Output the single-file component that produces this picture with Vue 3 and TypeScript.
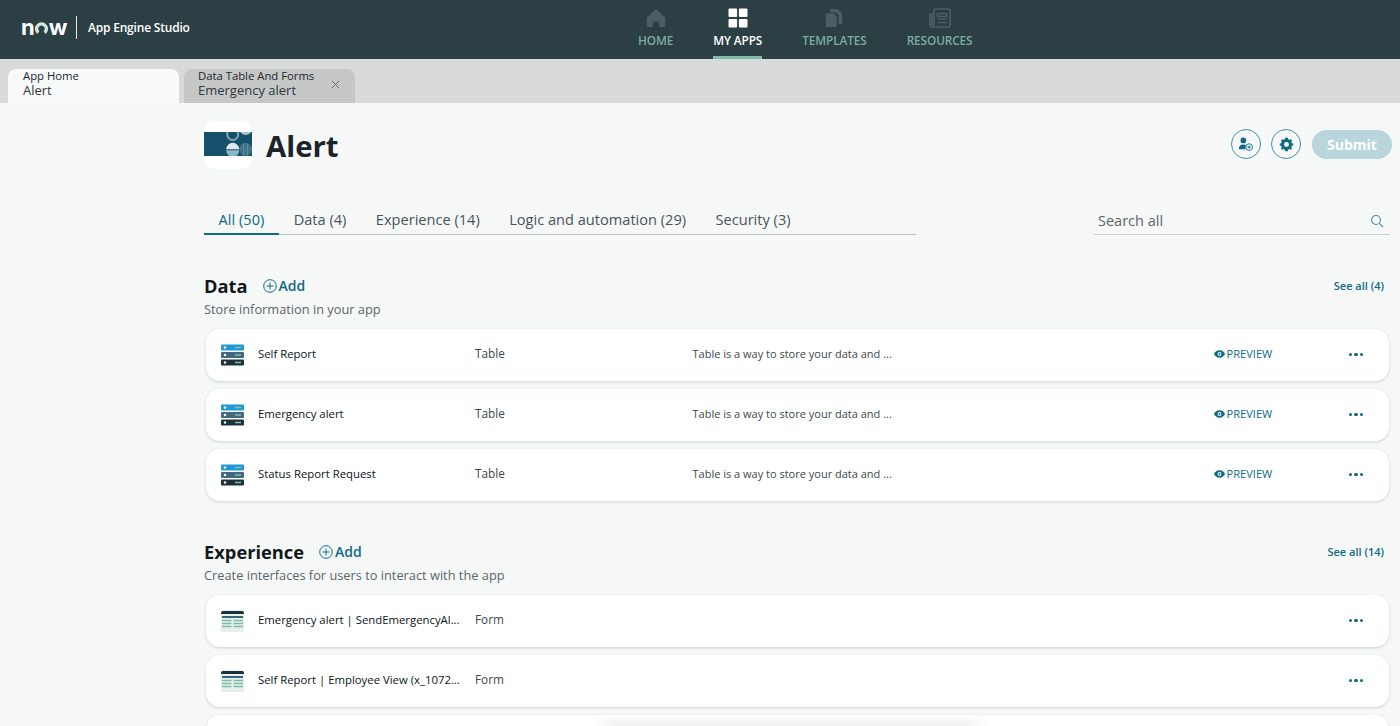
<script setup lang="ts">
interface Row { name: string; type: string; desc?: string; preview?: boolean; kind: 'table' | 'form' }
const navs = [
  { key: 'home', label: 'HOME' },
  { key: 'apps', label: 'MY APPS' },
  { key: 'templates', label: 'TEMPLATES' },
  { key: 'resources', label: 'RESOURCES' },
]
const filters = ['All (50)', 'Data (4)', 'Experience (14)', 'Logic and automation (29)', 'Security (3)']
const desc = 'Table is a way to store your data and ...'
const dataRows: Row[] = [
  { name: 'Self Report', type: 'Table', desc, preview: true, kind: 'table' },
  { name: 'Emergency alert', type: 'Table', desc, preview: true, kind: 'table' },
  { name: 'Status Report Request', type: 'Table', desc, preview: true, kind: 'table' },
]
const expRows: Row[] = [
  { name: 'Emergency alert | SendEmergencyAl...', type: 'Form', kind: 'form' },
  { name: 'Self Report | Employee View (x_1072...', type: 'Form', kind: 'form' },
  { name: '', type: '', kind: 'form' },
]
const sections = [
  { title: 'Data', sub: 'Store information in your app', see: 'See all (4)', rows: dataRows },
  { title: 'Experience', sub: 'Create interfaces for users to interact with the app', see: 'See all (14)', rows: expRows },
]
</script>

<template>
  <div class="page">
    <header class="topbar">
      <div class="brand">
        <span class="now">n<svg class="now-o" viewBox="0 0 16 16" width="15" height="15"><path d="M3.700 15A7 7 0 1 1 12.300 15L10.200 11.800A3.300 3.300 0 1 0 5.800 11.800Z" fill="#cfe8dc"/></svg>w</span>
        <span class="brand-sep"></span>
        <span class="brand-name">App Engine Studio</span>
      </div>
      <nav class="nav">
        <div v-for="n in navs" :key="n.key" class="nav-item" :class="{ active: n.key === 'apps' }">
          <svg v-if="n.key === 'home'" viewBox="0 0 22 22" width="22" height="22"><path d="M11 1.5 1 10.5V21h6.5v-6h7v6H21V10.5Z" fill="#4b5e62"/></svg>
          <svg v-else-if="n.key === 'apps'" viewBox="0 0 20 20" width="20" height="20"><rect x="0.5" y="0.5" width="8.6" height="8.6" rx="1" fill="#fff"/><rect x="10.9" y="0.5" width="8.6" height="8.6" rx="1" fill="#fff"/><rect x="0.5" y="10.9" width="8.6" height="8.6" rx="1" fill="#fff"/><rect x="10.9" y="10.9" width="8.6" height="8.6" rx="1" fill="#fff"/></svg>
          <svg v-else-if="n.key === 'templates'" viewBox="0 0 20 22" width="20" height="22"><path d="M7 1h7l5 5v11a1 1 0 0 1-1 1h-3V8l-3-3H6V2a1 1 0 0 1 1-1Z M2 6h8l3 3v11a1 1 0 0 1-1 1H2a1 1 0 0 1-1-1V7a1 1 0 0 1 1-1Z" fill="#4b5e62"/></svg>
          <svg v-else viewBox="0 0 22 20" width="22" height="20"><path d="M6 1h14a1 1 0 0 1 1 1v15a2 2 0 0 1-2 2H3a2 2 0 0 1-2-2V6h2v11h2V2a1 1 0 0 1 1-1Z" fill="none" stroke="#4b5e62" stroke-width="1.7"/><path d="M8.5 5.5h9v3h-9zM8.5 11h9M8.5 14.500h9" fill="none" stroke="#4b5e62" stroke-width="1.7"/></svg>
          <span class="nav-label">{{ n.label }}</span>
        </div>
      </nav>
    </header>

    <div class="tabstrip">
      <div class="tab tab-on">
        <div class="tab-top">App Home</div>
        <div class="tab-bot">Alert</div>
      </div>
      <div class="tab tab-off">
        <div class="tab-text">
          <div class="tab-top">Data Table And Forms</div>
          <div class="tab-bot">Emergency alert</div>
        </div>
        <svg class="tab-x" viewBox="0 0 10 10" width="9" height="9"><path d="M1 1l8 8M9 1l-8 8" stroke="#5c6468" stroke-width="1" fill="none"/></svg>
      </div>
    </div>

    <main class="main">
      <div class="head">
        <div class="app-ic">
          <svg viewBox="0 0 48 48" width="48" height="48">
            <defs><clipPath id="band"><rect x="0" y="11" width="48" height="24"/></clipPath></defs>
            <rect x="0" y="11" width="48" height="24" fill="#17506b"/>
            <g clip-path="url(#band)">
              <circle cx="28.700" cy="13.500" r="5.500" fill="none" stroke="#7da5b4" stroke-width="2"/>
              <circle cx="41.700" cy="8" r="6" fill="#a9c7d0"/>
              <circle cx="41.700" cy="28.300" r="6.500" fill="#3f7188"/>
              <path d="M39.500 22.500v12M43.500 22.500v12" stroke="#5a8a9e" stroke-width="1"/>
              <path d="M22.200 28.300a6.500 6.500 0 0 1 13 0Z" fill="#dfe9ec"/>
              <path d="M22.200 29.300a6.500 6.500 0 0 0 13 0Z" fill="#8fb6c3"/>
            </g>
          </svg>
        </div>
        <h1 class="title">Alert</h1>
        <div class="head-actions">
          <button class="circle">
            <svg viewBox="0 0 18 18" width="16" height="16"><circle cx="6" cy="5" r="3.200" fill="#0f6a85"/><path d="M1 15c0-4 2-5.500 5-5.500 1.300 0 2.300.3 3 .8A5 5 0 0 0 8.300 15Z" fill="#0f6a85"/><circle cx="12.500" cy="12.500" r="3.800" fill="none" stroke="#0f6a85" stroke-width="1"/><path d="M12.500 10.500v4M10.500 12.500h4" stroke="#0f6a85" stroke-width="1"/></svg>
          </button>
          <button class="circle">
            <svg viewBox="0 0 16 16" width="15" height="15"><path d="M8 1.200l1.300.3.500 1.700 1.300.6 1.600-.7 1.200 1.300-.8 1.500.5 1.400 1.600.6v1.800l-1.600.6-.5 1.300.8 1.600-1.200 1.300-1.600-.8-1.300.6-.5 1.700H6.700l-.5-1.700-1.300-.6-1.600.8-1.200-1.300.8-1.600-.5-1.300L.8 9.700V7.900l1.600-.6.5-1.400-.8-1.500 1.200-1.300 1.600.7 1.300-.6.500-1.700Z" fill="#0f6a85" transform="translate(0 -.8)"/><circle cx="8" cy="8" r="2.600" fill="#f6f8f8"/></svg>
          </button>
          <button class="submit">Submit</button>
        </div>
      </div>

      <div class="filter-row">
        <div class="filters">
          <div v-for="(f, i) in filters" :key="f" class="filter" :class="{ on: i === 0 }">{{ f }}</div>
        </div>
        <div class="search">
          <span>Search all</span>
          <svg viewBox="0 0 14 14" width="14" height="14"><circle cx="6" cy="6" r="4.500" fill="none" stroke="#4a8fa5" stroke-width="1.100"/><path d="M9.300 9.300l3.700 3.700" stroke="#4a8fa5" stroke-width="1.100"/></svg>
        </div>
      </div>

      <section v-for="s in sections" :key="s.title" class="section">
        <div class="sec-head">
          <h2 class="sec-title">{{ s.title }}</h2>
          <span class="add">
            <svg viewBox="0 0 14 14" width="14" height="14"><circle cx="7" cy="7" r="6.300" fill="none" stroke="#0f6a85" stroke-width="1"/><path d="M7 3.500v7M3.500 7h7" stroke="#0f6a85" stroke-width="1"/></svg>
            Add
          </span>
          <span class="see">{{ s.see }}</span>
        </div>
        <p class="sec-sub">{{ s.sub }}</p>
        <div class="rows">
          <div v-for="(r, i) in s.rows" :key="i" class="row">
            <template v-if="r.name">
              <svg v-if="r.kind === 'table'" class="row-ic" viewBox="0 0 23 22" width="23" height="22">
                <rect y="0.500" width="23" height="6" rx="1" fill="#1f9ad6"/>
                <rect y="8" width="23" height="6" rx="1" fill="#44687e"/>
                <rect y="15.500" width="23" height="6" rx="1" fill="#1c3238"/>
                <circle cx="4" cy="3.500" r="1.200" fill="#fff"/><circle cx="4" cy="11" r="1.200" fill="#fff"/><circle cx="4" cy="18.500" r="1.200" fill="#fff"/>
                <path d="M14 3.500h6M14 11h6M14 18.500h6" stroke="#7fc0ae" stroke-width="1.400"/>
              </svg>
              <svg v-else class="row-ic" viewBox="0 0 23 22" width="23" height="22">
                <rect y="0" width="23" height="22" rx="1.500" fill="#e6f0ee"/>
                <path d="M0 3a2 2 0 0 1 2-2h19a2 2 0 0 1 2 2v1H0Z" fill="#1c3238"/>
                <rect x="1" y="6" width="21" height="2" fill="#3c6478"/>
                <path d="M1 10.500h9.500M12.500 10.500H22M1 13.500h9.500M12.500 13.500H22M1 16.500h9.500M12.500 16.500H22" stroke="#7fbda3" stroke-width="1.300"/>
              </svg>
              <span class="r-name">{{ r.name }}</span>
              <span class="r-type">{{ r.type }}</span>
              <span class="r-desc">{{ r.desc }}</span>
              <span class="r-prev">
                <template v-if="r.preview">
                  <svg viewBox="0 0 12 8" width="11" height="8"><path d="M6 0C3.200 0 1 1.800 0 4c1 2.200 3.200 4 6 4s5-1.800 6-4c-1-2.200-3.200-4-6-4Z" fill="#0f6a85"/><circle cx="6" cy="4" r="2.100" fill="#fff"/><circle cx="6" cy="4" r="1.100" fill="#0f6a85"/></svg>
                  PREVIEW
                </template>
              </span>
              <span class="dots"><i></i><i></i><i></i></span>
            </template>
          </div>
        </div>
      </section>
    </main>
    <div class="bottom-fade"></div>
  </div>
</template>

<style>
html, body { margin: 0; height: 100%; overflow: hidden; background: #f6f8f8; }
</style>

<style scoped>
.page { position: relative; width: 1400px; height: 726px; overflow: hidden; background: #f6f8f8; font-family: "Open Sans", "Noto Sans", sans-serif; color: #1f2a2e; }
.topbar { height: 59px; background: #2b3f44; display: flex; position: relative; box-sizing: border-box; }
.brand { display: flex; align-items: center; padding-left: 21px; height: 55px; }
.now { display: inline-flex; align-items: center; color: #fff; font-family: "Inter", sans-serif; font-weight: 700; font-size: 22px; line-height: 1; letter-spacing: -0.5px; width: 46px; margin-top: -2px; }
.now-o { margin: 2px 0 0 -0.5px; }
.brand-sep { width: 1px; height: 23px; background: #e6ecec; margin: 0 11px 0 9px; }
.brand-name { color: #fff; font-size: 12px; font-weight: 600; letter-spacing: -0.2px; }
.nav { position: absolute; left: 618px; top: 0; display: flex; height: 59px; }
.nav-item { display: flex; flex-direction: column; align-items: center; box-sizing: border-box; margin: 0 20px; height: 59px; padding-top: 8px; color: #79ad9e; position: relative; }
.nav-item svg { height: 20px; display: block; }
.nav-label { font-size: 11.800px; font-weight: 600; line-height: 16px; margin-top: 4px; white-space: nowrap; letter-spacing: -0.1px; }
.nav-item.active { color: #fff; }
.nav-item.active::after { content: ""; position: absolute; left: 0; right: 0; bottom: 0; height: 3px; background: #7fbda6; }
.tabstrip { height: 44px; background: #d8d9d9; display: flex; padding: 10px 0 0 8px; box-sizing: border-box; gap: 5px; }
.tab { height: 34px; border-radius: 8px 8px 0 0; box-sizing: border-box; padding: 0 14px; }
.tab-on { width: 171px; background: #f8f9f9; padding-left: 15px; }
.tab-off { width: 171px; background: #c6c7c7; display: flex; align-items: flex-start; justify-content: space-between; padding-right: 15px; }
.tab-top { font-size: 11.300px; line-height: 13px; color: #20282c; }
.tab-bot { font-size: 13px; line-height: 16px; color: #2f383c; }
.tab-x { flex: none; margin-top: 11px; }
.main { padding: 18px 8px 0 204px; }
.head { display: flex; align-items: center; height: 48px; }
.app-ic { width: 48px; height: 48px; background: #fff; border-radius: 10px; overflow: hidden; flex: none; }
.app-ic svg { display: block; }
.title { margin: 2px 0 0 14px; font-size: 29.300px; font-weight: 700; line-height: 48px; color: #1a2428; }
.head-actions { margin-left: auto; display: flex; align-items: center; gap: 10px; margin-bottom: 2px; }
.circle { width: 30px; height: 30px; border-radius: 50%; border: 1px solid #4a8ba0; background: #f6f8f8; display: flex; align-items: center; justify-content: center; padding: 0; }
.submit { width: 80px; height: 29px; border: 0; border-radius: 15px; background: #b9d6dc; color: #fff; font: 700 14px "Open Sans", sans-serif; padding: 0; margin-left: 1px; }
.filter-row { display: flex; justify-content: space-between; align-items: flex-end; margin-top: 33px; height: 33px; padding-right: 2px; }
.filters { width: 712px; display: flex; border-bottom: 1px solid #b9c3c6; height: 33px; }
.filter { font-size: 14.600px; padding: 8px 14.800px 0 14.600px; height: 32px; line-height: 20px; box-sizing: border-box; color: #47555a; white-space: nowrap; }
.filter.on { color: #0f6a85; border-bottom: 2px solid #0f6a85; height: 34px; }
.search { width: 296px; height: 30px; border-bottom: 1px solid #ccd3d5; display: flex; align-items: center; justify-content: space-between; padding: 2px 6px 0 4px; box-sizing: border-box; font-size: 14.500px; color: #5b676b; }
.section { margin-top: 37px; }
.sec-head { display: flex; align-items: center; height: 28px; }
.sec-title { margin: 0; font-size: 18.300px; font-weight: 700; line-height: 28px; color: #11181b; }
.add { display: inline-flex; align-items: center; gap: 2px; margin-left: 15px; font-size: 14px; font-weight: 600; color: #0f6a85; line-height: 20px; }
.see { margin: 0 8px 2px auto; font-size: 11px; font-weight: 600; color: #0f6a85; }
.sec-sub { margin: 0; font-size: 12.800px; line-height: 18px; color: #5a6669; }
.rows { margin: 11px 3px 0 2px; display: flex; flex-direction: column; gap: 8px; }
.row { height: 52px; border-radius: 14px; background: #fff; box-shadow: 0 1px 3px rgba(40, 60, 65, 0.2); display: flex; align-items: center; padding-left: 15px; box-sizing: border-box; }
.row-ic { flex: none; display: block; margin-bottom: 1px; }
.r-name { width: 217px; margin: 0 0 3px 14px; font-size: 11.350px; font-weight: 500; color: #0c1417; white-space: nowrap; flex: none; }
.r-type { width: 217.500px; margin-bottom: 4px; font-size: 11.800px; color: #3c484c; flex: none; }
.r-desc { width: 521px; margin-bottom: 3px; font-size: 11px; color: #3c484c; flex: none; white-space: nowrap; }
.r-prev { width: 135px; margin-bottom: 3px; display: inline-flex; align-items: center; gap: 2px; font-size: 11.100px; font-weight: 500; color: #0f6a85; flex: none; }
.dots { display: inline-flex; gap: 2px; margin-bottom: 1px; }
.dots i { width: 3.500px; height: 3.500px; border-radius: 50%; background: #0f6a85; display: block; }
.bottom-fade { position: absolute; left: 590px; width: 400px; bottom: 0; height: 10px; background: linear-gradient(rgba(243, 243, 243, 0), #f3f3f3 60%); -webkit-mask-image: linear-gradient(90deg, transparent, #000 6%, #000 94%, transparent); mask-image: linear-gradient(90deg, transparent, #000 6%, #000 94%, transparent); }
</style>
